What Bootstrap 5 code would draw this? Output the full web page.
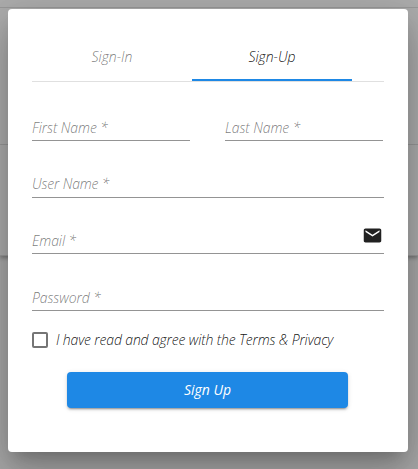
<!DOCTYPE html>
<html lang="en">
<head>
<meta charset="utf-8">
<meta name="viewport" content="width=device-width, initial-scale=1">
<title>Sign Up</title>
<link href="https://cdn.jsdelivr.net/npm/bootstrap@5.3.0/dist/css/bootstrap.min.css" rel="stylesheet">
<style>
body{font:italic 300 14px/20px "Open Sans",sans-serif;color:rgba(0,0,0,.92);background:#a9a9a9;height:469px;overflow:hidden}
/* page surface behind the dialog */
.page-surface{inset:0 0 auto 0;height:256px;background:#adadad;border-bottom:1px solid #999;box-shadow:0 2px 4px rgba(0,0,0,.3);z-index:0}
.surface-bar{height:8px;border-bottom:1px solid #999}
.surface-row{height:137px;border-bottom:1px solid #989898}
.dialog-card{z-index:1;width:400px;height:443px;margin:9px 0 0 8px;padding:24px;border-radius:4px;box-shadow:0 11px 15px -7px rgba(0,0,0,.2),0 24px 38px 3px rgba(0,0,0,.14),0 9px 46px 8px rgba(0,0,0,.12)}
.auth-tabs{width:352px;height:49px;border-bottom:1px solid #e0e0e0}
.auth-tabs .nav-link{width:160px;height:48px;padding:14px 0 0;line-height:20px;color:rgba(0,0,0,.54);border-bottom:2px solid transparent;border-radius:0}
.auth-tabs .nav-link.active{color:rgba(0,0,0,.92);border-color:#1e88e5}
.field{height:24px;border:0;border-bottom:1px solid #949494;border-radius:0;padding:1px 0 3px;font:inherit;line-height:19px;letter-spacing:-.08px;color:inherit;background:transparent}
.field:focus{box-shadow:none}
.field::placeholder{color:rgba(0,0,0,.54);opacity:1}
.field-raised{padding:0 0 4px;letter-spacing:-.15px}
.field-stack{margin-top:35px}
.name-row{gap:35px;width:351px}
.field-gap{margin-top:33px}
.field-gap-sm{margin-top:32px}
.mail-icon{right:1px;top:-5px}
.agree-row{margin-top:19px;gap:8px;height:20px;letter-spacing:-.145px}
.agree-row .form-check-input{width:16px;height:16px;border:2px solid #757575;border-radius:2px;margin:2px 0 0}
.submit-btn{width:281px;height:36px;margin:22px 0 0 35px;padding:0;border:0;border-radius:4px;background:#1e88e5;color:#fff;font:italic 400 14px/36px "Open Sans",sans-serif;box-shadow:0 3px 1px -2px rgba(0,0,0,.2),0 2px 2px rgba(0,0,0,.14),0 1px 5px rgba(0,0,0,.12)}
</style>
</head>
<body class="d-flex align-items-start position-relative">
<div class="page-surface position-absolute">
  <div class="surface-bar"></div>
  <div class="surface-row"></div>
</div>
<main class="dialog-card bg-white position-relative flex-shrink-0">
  <nav class="auth-tabs nav text-center">
    <a class="nav-link" href="#">Sign-In</a>
    <a class="nav-link active" href="#">Sign-Up</a>
  </nav>
  <form class="field-stack">
    <div class="name-row d-flex">
      <input class="field form-control" type="text" placeholder="First Name *">
      <input class="field form-control" type="text" placeholder="Last Name *">
    </div>
    <input class="field field-raised field-gap form-control" type="text" placeholder="User Name *">
    <div class="field-gap-sm position-relative">
      <input class="field form-control" type="text" placeholder="Email *">
      <svg class="mail-icon position-absolute" width="21" height="21" viewBox="0 0 24 24" fill="#212121"><path d="M20 4H4c-1.100 0-1.990.900-1.990 2L2 18c0 1.100.900 2 2 2h16c1.100 0 2-.900 2-2V6c0-1.100-.900-2-2-2zm0 4l-8 5-8-5V6l8 5 8-5v2z"/></svg>
    </div>
    <input class="field field-gap form-control" type="password" placeholder="Password *">
    <div class="agree-row d-flex">
      <input class="form-check-input flex-shrink-0" type="checkbox" id="agree">
      <label for="agree">I have read and agree with the Terms &amp; Privacy</label>
    </div>
    <button class="submit-btn btn btn-primary d-block" type="button">Sign Up</button>
  </form>
</main>
<script src="https://cdn.jsdelivr.net/npm/bootstrap@5.3.0/dist/js/bootstrap.bundle.min.js"></script>
</body>
</html>
